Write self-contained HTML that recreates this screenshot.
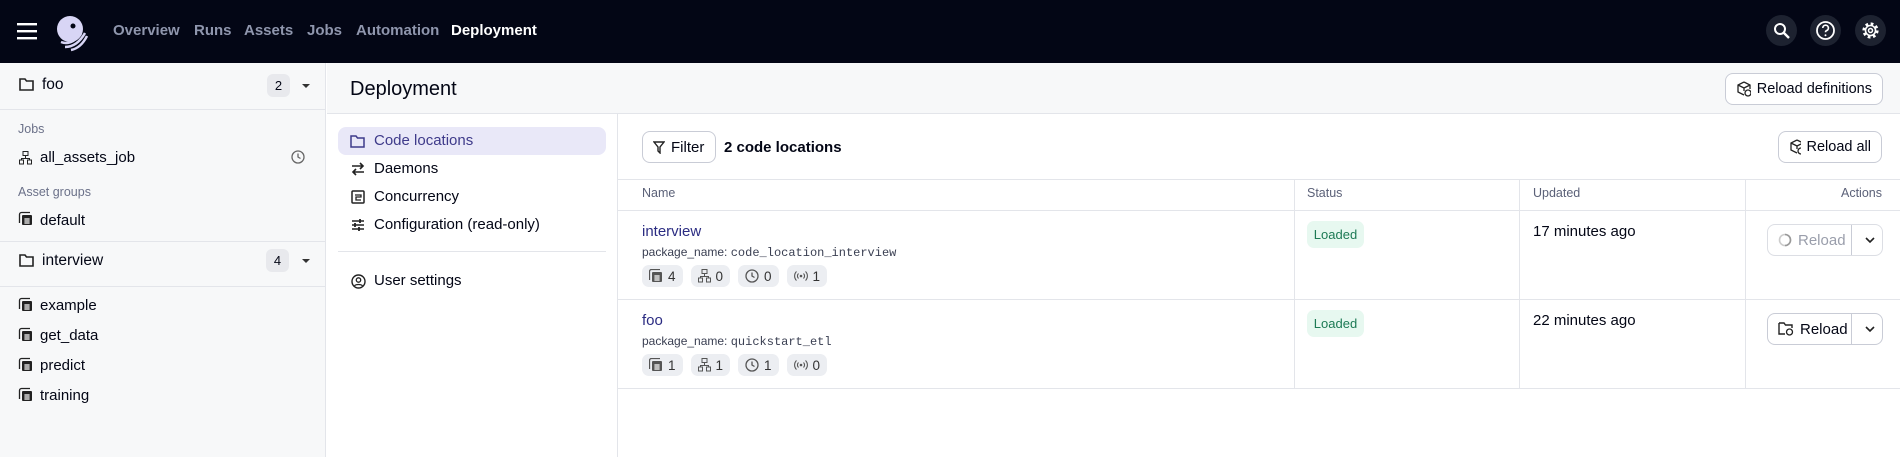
<!DOCTYPE html>
<html><head><meta charset="utf-8"><style>
*{box-sizing:border-box;margin:0;padding:0}
body{width:1900px;height:457px;overflow:hidden;font-family:"Liberation Sans",sans-serif;color:#030615;background:#fff;position:relative;font-size:15px}
.a{position:absolute;white-space:nowrap}
.hdr{left:0;top:0;width:1900px;height:63px;background:#030615}
.nav{top:22px;font-size:15px;font-weight:bold;color:#8f96ad}
.ic{width:31px;height:31px;border-radius:50%;background:#1d2230;top:15px}
.side{left:0;top:63px;width:326px;height:394px;background:#f7f8f9;border-right:1px solid #e3e5ea}
.row{left:0;width:326px;border-bottom:1px solid #e3e5ea}
.lbl{font-size:12.5px;color:#6b7189}
.cnt{width:23px;height:23px;border-radius:6px;background:#e8e9ed;font-size:13px;text-align:center;line-height:23px}
.caret{width:0;height:0;border-left:4px solid transparent;border-right:4px solid transparent;border-top:4px solid #333}
.sub{left:327px;top:63px;width:1573px;height:51px;background:#f7f8f9;border-bottom:1px solid #e3e5ea}
.btn{border:1px solid #c9ccd6;border-radius:8px;background:#fff;font-size:15px;display:flex;align-items:center;gap:6px;padding:0 10px;white-space:nowrap}
.th{top:186px;font-size:12.5px;color:#5b6178}
.hl{height:1px;background:#e3e5ea}
.vl{width:1px;background:#e3e5ea}
.link{color:#2b2c82;font-size:15px}
.mono{font-size:12px;color:#3a3f52}
.mono span{font-family:"Liberation Mono",monospace}
.bdg{height:22px;border-radius:7px;background:#eceef2;display:flex;align-items:center;gap:5px;padding:0 7px;font-size:13.5px;color:#333}
.ld{width:57px;height:27px;border-radius:7px;background:#e7f8f0;color:#1d7a55;font-size:13px;text-align:center;line-height:27px}
svg{display:block}
</style></head><body>
<svg width="0" height="0" style="position:absolute"><defs>
<g id="ag"><path d="M0.5 11V2.5a2 2 0 0 1 2-2H11" stroke="currentColor" stroke-width="1.3" fill="none"/><rect x="3" y="3" width="10" height="10" rx="1" fill="currentColor"/><path d="M5 7h6M5 9h6M5 11h6M7 6v6M9 6v6" stroke="#fff" stroke-width=".8"/></g>
<g id="job"><rect x="4" y="0.5" width="5" height="4" stroke="currentColor" fill="none"/><path d="M6.5 4.5v3M2.5 9V7.5h8V9" stroke="currentColor" fill="none"/><rect x="0.5" y="9" width="4" height="4" stroke="currentColor" fill="none"/><rect x="8.5" y="9" width="4" height="4" stroke="currentColor" fill="none"/></g>
<g id="clk"><circle cx="7" cy="7" r="6" stroke="currentColor" stroke-width="1.3" fill="none"/><path d="M7 3.5v3.5l2.5 1.5" stroke="currentColor" stroke-width="1.3" fill="none"/></g>
<g id="sen"><circle cx="7" cy="7" r="1.3" fill="currentColor"/><path d="M4.5 4.5a3.5 3.5 0 0 0 0 5M9.5 4.5a3.5 3.5 0 0 1 0 5M2.5 2.5a6.3 6.3 0 0 0 0 9M11.5 2.5a6.3 6.3 0 0 1 0 9" stroke="currentColor" stroke-width="1.1" fill="none"/></g>
<g id="chev"><path d="M1 1l4 4 4-4" stroke="#222" stroke-width="1.6" fill="none"/></g>
</defs></svg>
<div class="a hdr"></div>
<svg class="a" style="left:17px;top:22px" width="20" height="18"><rect y="1" width="20" height="2.4" fill="#fff"/><rect y="8" width="20" height="2.4" fill="#fff"/><rect y="15" width="20" height="2.4" fill="#fff"/></svg>
<svg class="a" style="left:53px;top:14px" width="38" height="38" viewBox="0 0 38 38"><ellipse cx="17" cy="15" rx="13" ry="13" fill="#d8d5f5"/><circle cx="20" cy="12" r="2.5" fill="#030615"/><path d="M8 28 q10 4 20 -8 M12 33 q12 0 20 -14 M18 36 q10 -2 16 -14" stroke="#d8d5f5" stroke-width="2.5" fill="none"/></svg>
<div class="a nav" style="left:113px">Overview</div>
<div class="a nav" style="left:194px">Runs</div>
<div class="a nav" style="left:244px">Assets</div>
<div class="a nav" style="left:307px">Jobs</div>
<div class="a nav" style="left:356px">Automation</div>
<div class="a nav" style="left:451px;color:#fff">Deployment</div>
<div class="a ic" style="left:1766px"><svg width="31" height="31"><circle cx="14" cy="14" r="5" stroke="#fff" stroke-width="2" fill="none"/><path d="M18 18l5 5" stroke="#fff" stroke-width="2.4"/></svg></div>
<div class="a ic" style="left:1810px"><svg width="31" height="31"><circle cx="15.5" cy="15.5" r="8.5" stroke="#fff" stroke-width="1.8" fill="none"/><path d="M12.8 13a2.8 2.8 0 1 1 3.5 2.7c-.6.3-.8.8-.8 1.5" stroke="#fff" stroke-width="1.7" fill="none"/><circle cx="15.5" cy="20.2" r="1" fill="#fff"/></svg></div>
<div class="a ic" style="left:1855px"><svg width="31" height="31"><circle cx="15.5" cy="15.5" r="6.5" stroke="#fff" stroke-width="3.2" stroke-dasharray="2.6 2.5" fill="none"/><circle cx="15.5" cy="15.5" r="5" stroke="#fff" stroke-width="1.6" fill="none"/><circle cx="15.5" cy="15.5" r="2" stroke="#fff" stroke-width="1.5" fill="none"/></svg></div>

<div class="a side"></div>
<div class="a row" style="top:63px;height:47px"></div>
<svg class="a" style="left:19px;top:78px" width="15" height="13"><path d="M1 1h5l1.5 2H14v9H1z" stroke="#222" stroke-width="1.6" fill="none"/></svg>
<div class="a" style="left:42px;top:76px;font-size:15.5px">foo</div>
<div class="a cnt" style="left:267px;top:74px">2</div>
<div class="a caret" style="left:302px;top:84px"></div>
<div class="a lbl" style="left:18px;top:122px">Jobs</div>
<svg class="a" style="left:19px;top:151px;color:#222" width="13" height="14"><use href="#job"/></svg>
<div class="a" style="left:40px;top:149px">all_assets_job</div>
<svg class="a" style="left:291px;top:150px;color:#666" width="14" height="14"><use href="#clk"/></svg>
<div class="a lbl" style="left:18px;top:185px">Asset groups</div>
<div class="a" style="left:40px;top:212px">default</div>
<div class="a row" style="top:241px;height:46px;border-top:1px solid #e3e5ea"></div>
<svg class="a" style="left:19px;top:254px" width="15" height="13"><path d="M1 1h5l1.5 2H14v9H1z" stroke="#222" stroke-width="1.6" fill="none"/></svg>
<div class="a" style="left:42px;top:252px;font-size:15.5px">interview</div>
<div class="a cnt" style="left:266px;top:249px">4</div>
<div class="a caret" style="left:302px;top:259px"></div>
<div class="a" style="left:40px;top:297px">example</div>
<div class="a" style="left:40px;top:327px">get_data</div>
<div class="a" style="left:40px;top:357px">predict</div>
<div class="a" style="left:40px;top:387px">training</div>
<svg class="a" style="left:0;top:0;color:#222" width="40" height="457">
<use href="#ag" x="19" y="212"/><use href="#ag" x="19" y="298"/><use href="#ag" x="19" y="328"/><use href="#ag" x="19" y="358"/><use href="#ag" x="19" y="388"/></svg>

<div class="a sub"></div>
<div class="a" style="left:350px;top:78px;font-size:20px;font-weight:500">Deployment</div>
<div class="a btn" style="left:1725px;top:73px;width:158px;height:32px;font-size:14.5px"><svg width="16" height="16"><path d="M8 1l6 3v4M8 1L2 4v7l6 3M2 4l6 3 6-3M8 7v3" stroke="#222" stroke-width="1.3" fill="none"/><circle cx="12" cy="12" r="3" stroke="#222" stroke-width="1.3" fill="#fff"/></svg>Reload definitions</div>

<div class="a vl" style="left:617px;top:114px;height:343px"></div>
<div class="a" style="left:338px;top:127px;width:268px;height:28px;border-radius:8px;background:#e9e8f8"></div>
<svg class="a" style="left:350px;top:135px" width="15" height="13"><path d="M1 1h5l1.5 2H14v9H1z" stroke="#3e3a8a" stroke-width="1.5" fill="none"/></svg>
<div class="a" style="left:374px;top:132px;color:#3e3a8a">Code locations</div>
<svg class="a" style="left:351px;top:162px" width="14" height="14"><path d="M1 4h11M9 1l3 3-3 3M13 10H2M5 7l-3 3 3 3" stroke="#222" stroke-width="1.6" fill="none"/></svg>
<div class="a" style="left:374px;top:160px">Daemons</div>
<svg class="a" style="left:351px;top:190px" width="14" height="14"><rect x="1" y="1" width="12" height="12" rx="1" stroke="#222" stroke-width="1.5" fill="none"/><path d="M4 5h6v2H5v3h5" stroke="#222" stroke-width="1.3" fill="none"/></svg>
<div class="a" style="left:374px;top:188px">Concurrency</div>
<svg class="a" style="left:351px;top:218px" width="14" height="14"><path d="M1 3h12M1 7h12M1 11h12" stroke="#222" stroke-width="1.4"/><path d="M9 1v4M4 5v4M8 9v4" stroke="#222" stroke-width="1.8"/></svg>
<div class="a" style="left:374px;top:216px">Configuration (read-only)</div>
<div class="a hl" style="left:338px;top:251px;width:268px"></div>
<svg class="a" style="left:351px;top:274px" width="15" height="15"><circle cx="7.5" cy="7.5" r="6.5" stroke="#222" stroke-width="1.4" fill="none"/><circle cx="7.5" cy="6" r="2.2" stroke="#222" stroke-width="1.3" fill="none"/><path d="M3.5 12c1-2 7-2 8 0" stroke="#222" stroke-width="1.3" fill="none"/></svg>
<div class="a" style="left:374px;top:272px">User settings</div>

<div class="a btn" style="left:642px;top:131px;width:74px;height:32px"><svg width="12" height="13"><path d="M1 1h10L7 6v6L5 10V6z" stroke="#222" stroke-width="1.4" fill="none"/></svg>Filter</div>
<div class="a" style="left:724px;top:139px;font-weight:bold">2 code locations</div>
<div class="a btn" style="left:1778px;top:131px;width:104px;height:32px;font-size:14.5px"><svg width="16" height="16"><path d="M8 1l6 3v4M8 1L2 4v7l6 3M2 4l6 3 6-3M8 7v3" stroke="#222" stroke-width="1.3" fill="none"/><circle cx="12" cy="12" r="3" stroke="#222" stroke-width="1.3" fill="#fff"/></svg>Reload all</div>

<div class="a hl" style="left:618px;top:179px;width:1282px"></div>
<div class="a hl" style="left:618px;top:210px;width:1282px"></div>
<div class="a hl" style="left:618px;top:299px;width:1282px"></div>
<div class="a hl" style="left:618px;top:388px;width:1282px"></div>
<div class="a vl" style="left:1294px;top:179px;height:209px"></div>
<div class="a vl" style="left:1519px;top:179px;height:209px"></div>
<div class="a vl" style="left:1745px;top:179px;height:209px"></div>
<div class="a th" style="left:642px">Name</div>
<div class="a th" style="left:1307px">Status</div>
<div class="a th" style="left:1533px">Updated</div>
<div class="a th" style="right:18px">Actions</div>

<div class="a link" style="left:642px;top:223px">interview</div>
<div class="a mono" style="left:642px;top:245px">package_name: <span>code_location_interview</span></div>
<div class="a" style="left:642px;top:265px;display:flex;gap:8px">
<div class="bdg"><svg width="14" height="14" style="color:#555"><use href="#ag"/></svg>4</div><div class="bdg"><svg width="13" height="14" style="color:#555"><use href="#job"/></svg>0</div><div class="bdg"><svg width="14" height="14" style="color:#555"><use href="#clk"/></svg>0</div><div class="bdg"><svg width="14" height="14" style="color:#555"><use href="#sen"/></svg>1</div></div>
<div class="a ld" style="left:1307px;top:221px">Loaded</div>
<div class="a" style="left:1533px;top:223px">17 minutes ago</div>
<div class="a btn" style="left:1767px;top:224px;width:116px;height:32px;color:#9a9eab;border-color:#dcdee4;padding:0"><div style="display:flex;align-items:center;gap:6px;padding-left:10px;width:84px;border-right:1px solid #c9ccd6;height:100%"><svg width="14" height="14"><circle cx="7" cy="7" r="5.5" stroke="#ccc" stroke-width="1.6" fill="none"/><path d="M7 1.5a5.5 5.5 0 0 1 0 11" stroke="#999" stroke-width="1.6" fill="none"/></svg>Reload</div><div style="flex:1;display:flex;justify-content:center"><svg width="10" height="7"><use href="#chev"/></svg></div></div>

<div class="a link" style="left:642px;top:312px">foo</div>
<div class="a mono" style="left:642px;top:334px">package_name: <span>quickstart_etl</span></div>
<div class="a" style="left:642px;top:354px;display:flex;gap:8px">
<div class="bdg"><svg width="14" height="14" style="color:#555"><use href="#ag"/></svg>1</div><div class="bdg"><svg width="13" height="14" style="color:#555"><use href="#job"/></svg>1</div><div class="bdg"><svg width="14" height="14" style="color:#555"><use href="#clk"/></svg>1</div><div class="bdg"><svg width="14" height="14" style="color:#555"><use href="#sen"/></svg>0</div></div>
<div class="a ld" style="left:1307px;top:310px">Loaded</div>
<div class="a" style="left:1533px;top:312px">22 minutes ago</div>
<div class="a btn" style="left:1767px;top:313px;width:116px;height:32px;padding:0"><div style="display:flex;align-items:center;gap:6px;padding-left:10px;width:84px;border-right:1px solid #c9ccd6;height:100%"><svg width="16" height="14"><path d="M1 1h5l1.5 2H14v3M7 12H1V1" stroke="#222" stroke-width="1.4" fill="none"/><circle cx="11.5" cy="10" r="3" stroke="#222" stroke-width="1.3" fill="none"/></svg>Reload</div><div style="flex:1;display:flex;justify-content:center"><svg width="10" height="7"><use href="#chev"/></svg></div></div>
</body></html>
